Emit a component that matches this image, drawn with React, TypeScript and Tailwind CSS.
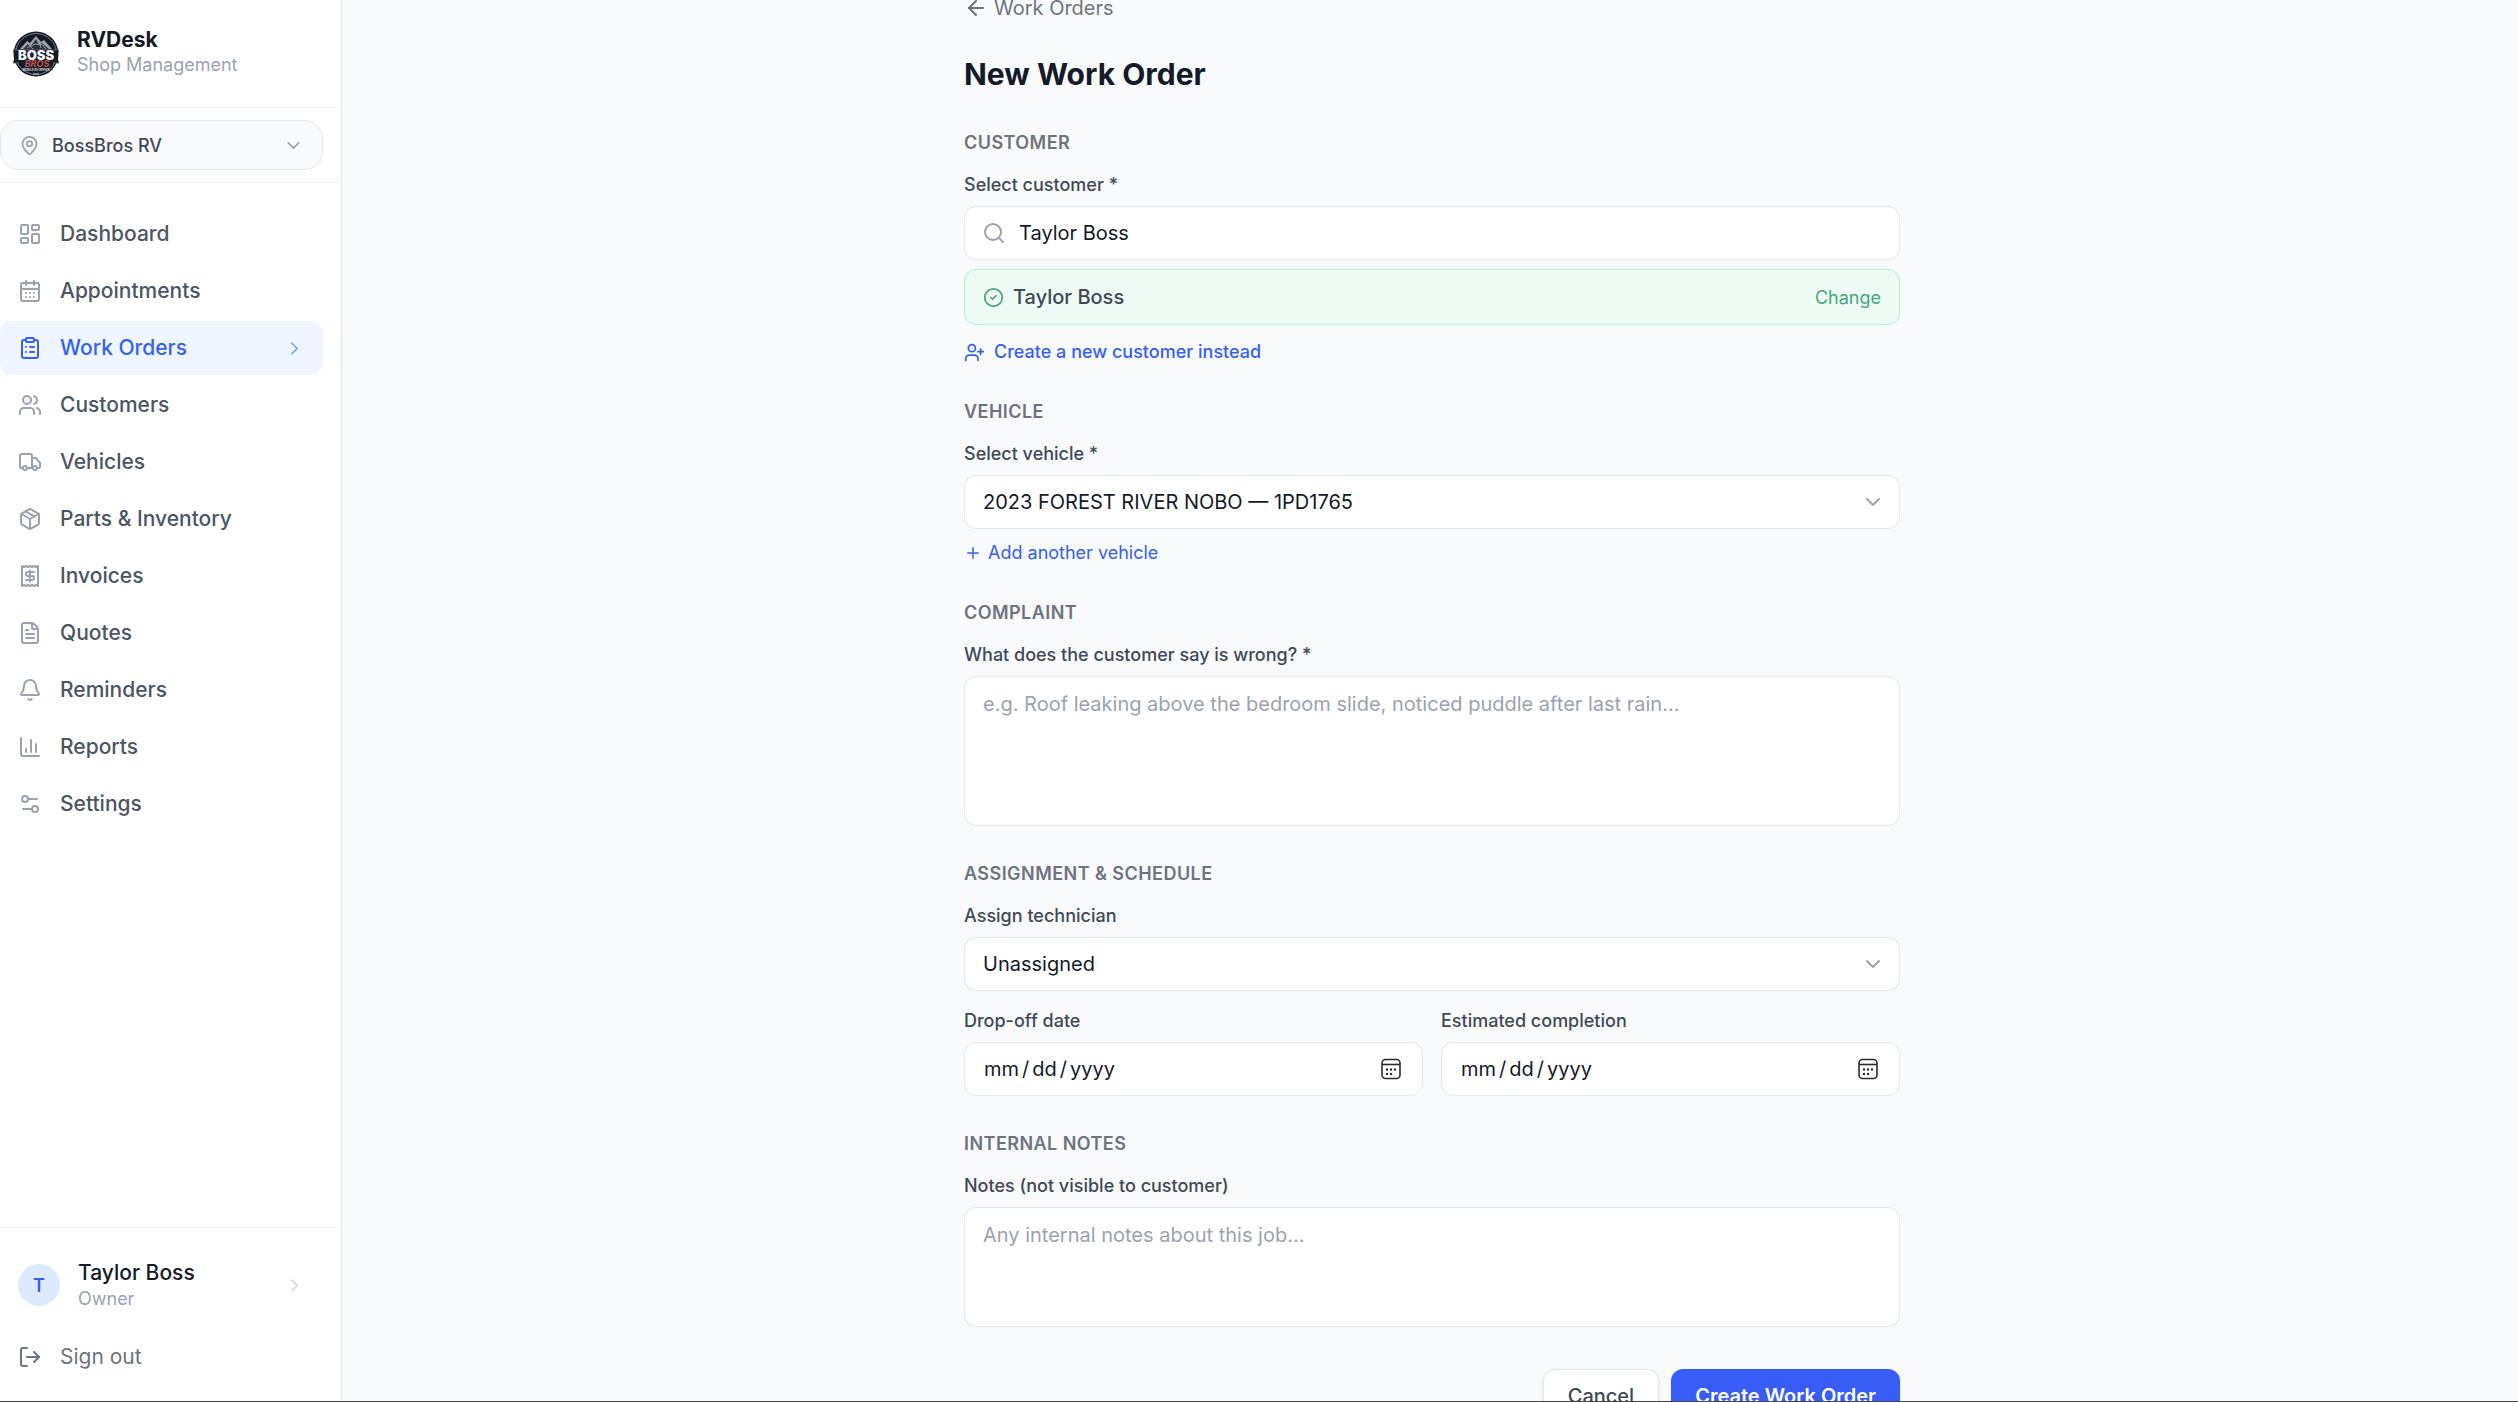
import {
  ArrowLeft,
  Bell,
  CalendarDays,
  ChartColumn,
  ChevronDown,
  ChevronRight,
  CircleCheck,
  ClipboardList,
  FileText,
  LayoutDashboard,
  LogOut,
  MapPin,
  Package,
  Plus,
  Receipt,
  Search,
  Settings2,
  Truck,
  UserPlus,
  Users,
} from "lucide-react";

const navItems = [
  { label: "Dashboard", icon: LayoutDashboard },
  { label: "Appointments", icon: CalendarDays },
  { label: "Work Orders", icon: ClipboardList, active: true },
  { label: "Customers", icon: Users },
  { label: "Vehicles", icon: Truck },
  { label: "Parts & Inventory", icon: Package },
  { label: "Invoices", icon: Receipt },
  { label: "Quotes", icon: FileText },
  { label: "Reminders", icon: Bell },
  { label: "Reports", icon: ChartColumn },
  { label: "Settings", icon: Settings2 },
];

const headingClass = "text-[18px] leading-6 font-semibold uppercase tracking-wide text-[#6d7380]";
const labelClass = "block mb-[9px] text-[18px] leading-6 font-medium text-[#3f4956]";
const fieldClass =
  "block w-full rounded-xl border border-[#e4e6ea] bg-white text-[#141a28] placeholder:text-[#9ba2af] outline-none focus:border-blue-500";

function Logo() {
  return (
    <svg viewBox="0 0 46 46" className="size-[46px] shrink-0" role="img" aria-label="Boss Bros">
      <circle cx="23" cy="23" r="22.5" fill="#141a26" />
      <circle cx="23" cy="23" r="20.5" fill="none" stroke="#8d929b" strokeWidth="0.8" />
      <path d="M7 18 14 10l3 2 6-7 5 6 3-2 8 9Z" fill="#9da2ab" />
      <path d="m9 19 6-6 2 3 6-8 3 6 3-2 8 7Z" fill="#2c333f" />
      <path d="m14 17 8-4 8 1 3 4M16 14l4 4m6-7 2 6" fill="none" stroke="#959ba5" strokeWidth="1" />
      <path d="M0 19h46l-2 6 2 7H0l2-7Z" fill="#141a26" />
      <path d="M0 19h46M0 32h6m34 0h6" stroke="#6f7681" strokeWidth="0.8" />
      <text
        x="23"
        y="29"
        textAnchor="middle"
        fontFamily="Inter, sans-serif"
        fontSize="13"
        fontWeight="900"
        fill="#f4f5f7"
      >
        BOSS
      </text>
      <text
        x="24"
        y="36"
        textAnchor="middle"
        fontFamily="Inter, sans-serif"
        fontSize="9"
        fontStyle="italic"
        fontWeight="700"
        fill="#c4564d"
      >
        BROS
      </text>
      <text
        x="23"
        y="40"
        textAnchor="middle"
        fontFamily="Inter, sans-serif"
        fontSize="3"
        fontWeight="700"
        fill="#d5d8dd"
      >
        MOBILE RV REPAIR
      </text>
      <path d="m20 42 6 2m0-2-6 2" stroke="#a9aeb6" strokeWidth="0.8" />
    </svg>
  );
}

function Sidebar() {
  return (
    <aside className="flex w-[342px] shrink-0 flex-col border-r border-[#e5e7eb] bg-white">
      <div className="flex h-[108px] items-center gap-[18px] border-b border-[#f1f2f4] pl-[13px]">
        <Logo />
        <div className="pb-1">
          <p className="text-[21px] leading-[26px] font-bold text-[#141a28]">RVDesk</p>
          <p className="text-[18px] leading-6 text-[#9ba2af]">Shop Management</p>
        </div>
      </div>

      <div className="border-b border-[#f1f2f4] py-3 pr-[18px]">
        <button
          type="button"
          className="flex h-[50px] w-full items-center gap-3 rounded-[18px] border border-[#e5e7eb] bg-[#f9fafc] px-[18px] text-[18px] font-medium text-[#3f4956]"
        >
          <MapPin size={21} className="text-[#9ba2af]" />
          <span className="flex-1 text-left">BossBros RV</span>
          <ChevronDown size={21} className="text-[#9ba2af]" />
        </button>
      </div>

      <nav className="flex flex-1 flex-col gap-[3px] py-6 pr-[18px]">
        {navItems.map(({ label, icon: Icon, active }) => (
          <a
            key={label}
            href="#"
            aria-current={active ? "page" : undefined}
            className={
              active
                ? "flex h-[54px] items-center gap-[18px] rounded-xl bg-[#eff6ff] px-[18px] text-[21px] font-medium text-[#3560f5]"
                : "flex h-[54px] items-center gap-[18px] rounded-xl px-[18px] text-[21px] font-medium text-[#4c5564] hover:bg-gray-50"
            }
          >
            <Icon size={24} className={active ? "" : "text-[#9ba2af]"} />
            <span className="flex-1">{label}</span>
            {active && <ChevronRight size={21} className="text-[#6fa4f8]" />}
          </a>
        ))}
      </nav>

      <div className="border-t border-[#f1f2f4] pt-6 pr-[18px] pb-[17px]">
        <a href="#" className="flex h-[66px] items-center px-[18px]">
          <span className="flex size-[42px] items-center justify-center rounded-full bg-[#dbeafc] text-[18px] font-semibold text-[#3560f5]">
            T
          </span>
          <span className="ml-[18px] flex-1">
            <span className="block text-[21px] leading-[28px] font-medium text-[#141a28]">Taylor Boss</span>
            <span className="block text-[18px] leading-6 text-[#9ba2af]">Owner</span>
          </span>
          <ChevronRight size={21} className="text-[#d3d6db]" />
        </a>
        <button
          type="button"
          className="mt-3 flex h-[54px] w-full items-center gap-[18px] px-[18px] text-[21px] text-[#6d7380]"
        >
          <LogOut size={24} />
          Sign out
        </button>
      </div>
    </aside>
  );
}

function SelectField({ id, label, options }: { id: string; label: string; options: string[] }) {
  return (
    <div>
      <label htmlFor={id} className={labelClass}>
        {label}
      </label>
      <div className="relative">
        <select id={id} className={`${fieldClass} h-[54px] appearance-none pr-12 pl-[18px] text-[20px]`}>
          {options.map((option) => (
            <option key={option}>{option}</option>
          ))}
        </select>
        <ChevronDown
          size={24}
          className="pointer-events-none absolute top-[15px] right-[15px] text-[#9ba2af]"
        />
      </div>
    </div>
  );
}

function DateField({ id, label }: { id: string; label: string }) {
  return (
    <div className="flex-1">
      <label htmlFor={id} className={labelClass}>
        {label}
      </label>
      <div className="relative">
        <input
          id={id}
          type="date"
          className={`${fieldClass} h-[54px] px-[18px] text-[20px] [&::-webkit-calendar-picker-indicator]:opacity-0 [&::-webkit-datetime-edit-text]:px-[2px]`}
        />
        <svg
          viewBox="0 0 20 22"
          className="pointer-events-none absolute top-4 right-[22px] h-[22px] w-5"
          fill="none"
          stroke="#2a2c31"
          strokeWidth="1.6"
        >
          <rect x="1" y="1.5" width="18" height="19" rx="3.5" />
          <path d="M1 6.5h18" />
          <path
            d="M6 11.5h.01M10 11.5h.01M14 11.5h.01M6 16h.01M10 16h.01"
            strokeWidth="2.4"
            strokeLinecap="round"
          />
        </svg>
      </div>
    </div>
  );
}

export default function App() {
  return (
    <div className="flex h-screen overflow-hidden border-b border-[#444444] bg-[#f9fafc] font-['Inter',sans-serif]">
      <Sidebar />

      <main className="min-w-0 flex-1 overflow-hidden pl-1">
        <div className="mx-auto -mt-[7px] max-w-[1008px] px-9">
          <a href="#" className="flex w-fit items-center gap-[6px] text-[20px] leading-[30px] text-[#6d7380]">
            <ArrowLeft size={24} />
            Work Orders
          </a>
          <h1 className="mt-[30px] text-[30px] leading-[42px] font-bold text-[#141a28]">New Work Order</h1>

          <form className="mt-9 flex flex-col gap-9">
            <section className="flex flex-col gap-[18px]">
              <h2 className={headingClass}>Customer</h2>
              <div>
                <label htmlFor="customer" className={labelClass}>
                  Select customer *
                </label>
                <div className="relative">
                  <Search
                    size={24}
                    className="pointer-events-none absolute top-[15px] left-[18px] text-[#9ba2af]"
                  />
                  <input
                    id="customer"
                    type="text"
                    defaultValue="Taylor Boss"
                    className={`${fieldClass} h-[54px] pr-[18px] pl-[54px] text-[20px]`}
                  />
                </div>
                <div className="mt-[9px] flex h-14 items-center gap-[9px] rounded-xl border border-[#b5edd0] bg-[#eefbf5] px-[18px]">
                  <CircleCheck size={21} className="text-[#48a57b]" />
                  <span className="flex-1 text-[20px] font-medium text-[#3f4956]">Taylor Boss</span>
                  <button type="button" className="text-[18px] text-[#48a57b]">
                    Change
                  </button>
                </div>
                <button
                  type="button"
                  className="mt-[15px] flex items-center gap-[9px] text-[18px] leading-6 font-medium text-[#3560f5]"
                >
                  <UserPlus size={21} />
                  Create a new customer instead
                </button>
              </div>
            </section>

            <section className="flex flex-col gap-[18px]">
              <h2 className={headingClass}>Vehicle</h2>
              <div>
                <SelectField
                  id="vehicle"
                  label="Select vehicle *"
                  options={["2023 FOREST RIVER NOBO — 1PD1765"]}
                />
                <button
                  type="button"
                  className="mt-3 flex items-center gap-[6px] text-[18px] leading-6 text-[#3560f5]"
                >
                  <Plus size={18} />
                  Add another vehicle
                </button>
              </div>
            </section>

            <section className="flex flex-col gap-[18px]">
              <h2 className={headingClass}>Complaint</h2>
              <div>
                <label htmlFor="complaint" className={labelClass}>
                  What does the customer say is wrong? *
                </label>
                <textarea
                  id="complaint"
                  placeholder="e.g. Roof leaking above the bedroom slide, noticed puddle after last rain…"
                  className={`${fieldClass} h-[150px] resize-none px-[18px] py-3 text-[20px] leading-[30px]`}
                />
              </div>
            </section>

            <section className="flex flex-col gap-[18px]">
              <h2 className={headingClass}>Assignment &amp; Schedule</h2>
              <SelectField id="technician" label="Assign technician" options={["Unassigned"]} />
              <div className="flex gap-[18px]">
                <DateField id="dropoff" label="Drop-off date" />
                <DateField id="completion" label="Estimated completion" />
              </div>
            </section>

            <section className="flex flex-col gap-[18px]">
              <h2 className={headingClass}>Internal Notes</h2>
              <div>
                <label htmlFor="notes" className={labelClass}>
                  Notes (not visible to customer)
                </label>
                <textarea
                  id="notes"
                  placeholder="Any internal notes about this job…"
                  className={`${fieldClass} h-[120px] resize-none px-[18px] py-3 text-[20px] leading-[30px]`}
                />
              </div>
            </section>

            <div className="mt-[6px] flex justify-end gap-3 pb-9">
              <button
                type="button"
                className="h-[54px] rounded-xl border border-[#e4e6ea] bg-white px-6 text-[20px] font-medium text-[#3f4956] shadow-sm"
              >
                Cancel
              </button>
              <button
                type="submit"
                className="h-[54px] rounded-xl bg-[#375df6] px-6 text-[20px] font-semibold text-white shadow-sm"
              >
                Create Work Order
              </button>
            </div>
          </form>
        </div>
      </main>
    </div>
  );
}
